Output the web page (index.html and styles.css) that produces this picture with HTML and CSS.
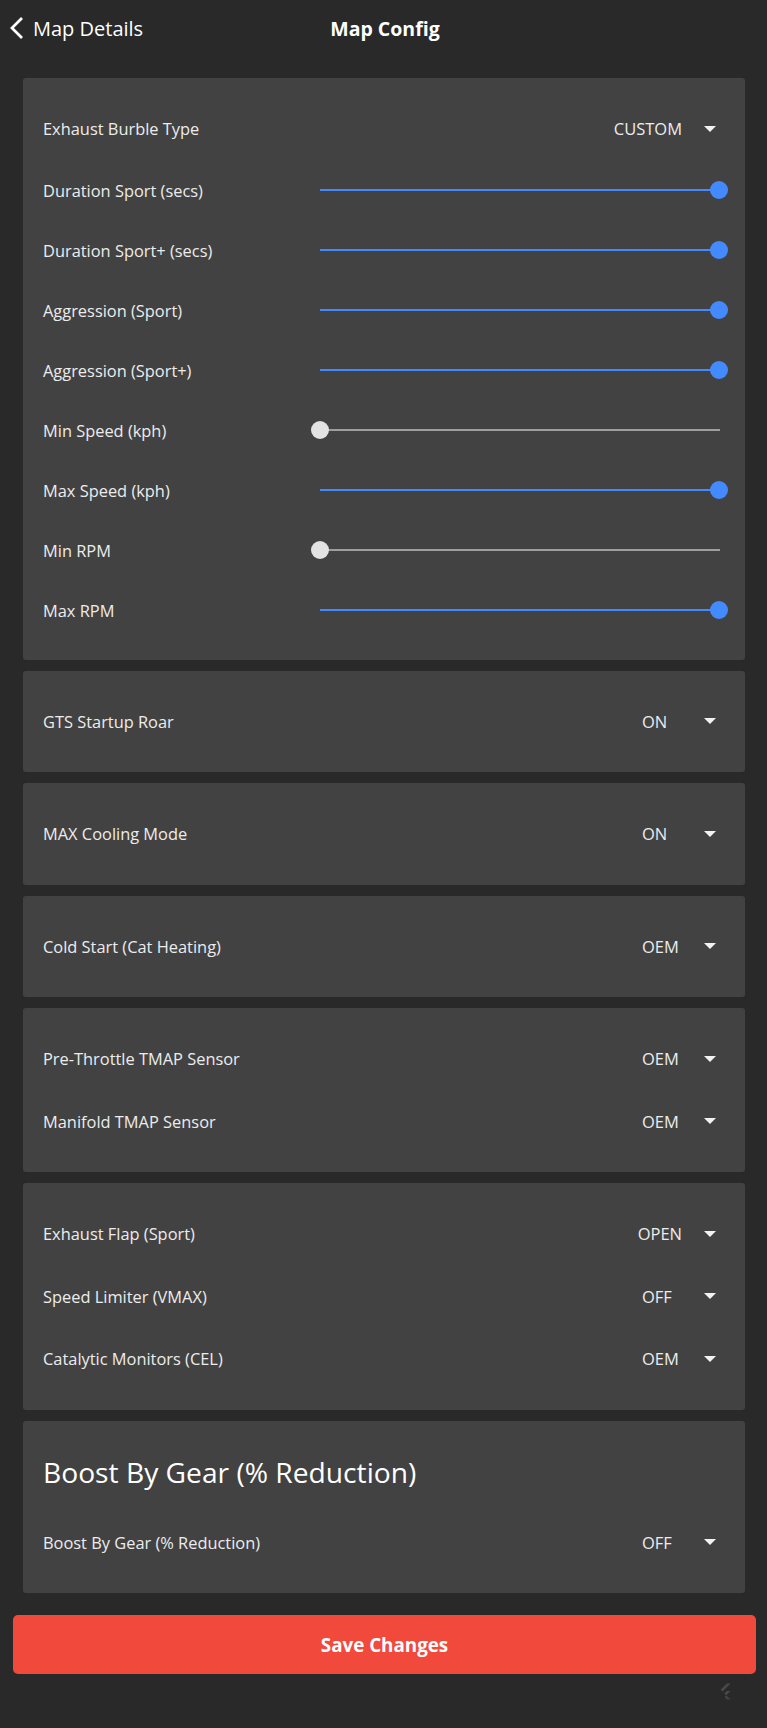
FILE: index.html
```html
<!DOCTYPE html>
<html lang="en">
<head>
    <meta charset="UTF-8">
    <meta name="viewport" content="width=device-width, initial-scale=1.0">
    <title>Map Config</title>
    <link rel="stylesheet" href="styles.css">
</head>
<body>

    <header class="topbar">
        <a class="back" href="#">
            <svg class="back-icon" viewBox="0 2.1 11.67 19.8" width="13" height="22">
                <path d="M11.67 3.87L9.9 2.1 0 12l9.9 9.9 1.77-1.77L3.54 12z" fill="#ffffff"/>
            </svg>
            <span>Map Details</span>
        </a>
        <h1 class="title">Map Config</h1>
        <div></div>
    </header>

    <main class="content">

        <section class="card">
            <div class="row">
                <span class="label">Exhaust Burble Type</span>
                <div class="select"><span class="value">CUSTOM</span><svg class="caret" viewBox="0 0 12 6"><path d="M0 0h12L6 6z"/></svg></div>
            </div>
            <div class="row slider-row">
                <span class="label">Duration Sport (secs)</span>
                <div class="slider full"><div class="track"></div><div class="thumb"></div></div>
            </div>
            <div class="row slider-row">
                <span class="label">Duration Sport+ (secs)</span>
                <div class="slider full"><div class="track"></div><div class="thumb"></div></div>
            </div>
            <div class="row slider-row">
                <span class="label">Aggression (Sport)</span>
                <div class="slider full"><div class="track"></div><div class="thumb"></div></div>
            </div>
            <div class="row slider-row">
                <span class="label">Aggression (Sport+)</span>
                <div class="slider full"><div class="track"></div><div class="thumb"></div></div>
            </div>
            <div class="row slider-row">
                <span class="label">Min Speed (kph)</span>
                <div class="slider empty"><div class="track"></div><div class="thumb"></div></div>
            </div>
            <div class="row slider-row">
                <span class="label">Max Speed (kph)</span>
                <div class="slider full"><div class="track"></div><div class="thumb"></div></div>
            </div>
            <div class="row slider-row">
                <span class="label">Min RPM</span>
                <div class="slider empty"><div class="track"></div><div class="thumb"></div></div>
            </div>
            <div class="row slider-row">
                <span class="label">Max RPM</span>
                <div class="slider full"><div class="track"></div><div class="thumb"></div></div>
            </div>
        </section>

        <section class="card">
            <div class="row">
                <span class="label">GTS Startup Roar</span>
                <div class="select"><span class="value">ON</span><svg class="caret" viewBox="0 0 12 6"><path d="M0 0h12L6 6z"/></svg></div>
            </div>
        </section>

        <section class="card">
            <div class="row">
                <span class="label">MAX Cooling Mode</span>
                <div class="select"><span class="value">ON</span><svg class="caret" viewBox="0 0 12 6"><path d="M0 0h12L6 6z"/></svg></div>
            </div>
        </section>

        <section class="card">
            <div class="row">
                <span class="label">Cold Start (Cat Heating)</span>
                <div class="select"><span class="value">OEM</span><svg class="caret" viewBox="0 0 12 6"><path d="M0 0h12L6 6z"/></svg></div>
            </div>
        </section>

        <section class="card">
            <div class="row">
                <span class="label">Pre-Throttle TMAP Sensor</span>
                <div class="select"><span class="value">OEM</span><svg class="caret" viewBox="0 0 12 6"><path d="M0 0h12L6 6z"/></svg></div>
            </div>
            <div class="row">
                <span class="label">Manifold TMAP Sensor</span>
                <div class="select"><span class="value">OEM</span><svg class="caret" viewBox="0 0 12 6"><path d="M0 0h12L6 6z"/></svg></div>
            </div>
        </section>

        <section class="card">
            <div class="row">
                <span class="label">Exhaust Flap (Sport)</span>
                <div class="select"><span class="value">OPEN</span><svg class="caret" viewBox="0 0 12 6"><path d="M0 0h12L6 6z"/></svg></div>
            </div>
            <div class="row">
                <span class="label">Speed Limiter (VMAX)</span>
                <div class="select"><span class="value">OFF</span><svg class="caret" viewBox="0 0 12 6"><path d="M0 0h12L6 6z"/></svg></div>
            </div>
            <div class="row">
                <span class="label">Catalytic Monitors (CEL)</span>
                <div class="select"><span class="value">OEM</span><svg class="caret" viewBox="0 0 12 6"><path d="M0 0h12L6 6z"/></svg></div>
            </div>
        </section>

        <section class="card">
            <h2 class="card-title">Boost By Gear (% Reduction)</h2>
            <div class="row">
                <span class="label">Boost By Gear (% Reduction)</span>
                <div class="select"><span class="value">OFF</span><svg class="caret" viewBox="0 0 12 6"><path d="M0 0h12L6 6z"/></svg></div>
            </div>
        </section>

    </main>

    <div class="actions">
        <button class="save-btn" type="button">Save Changes</button>
    </div>

    <footer class="footer">
        <svg class="logo" viewBox="0 0 12 16" width="12" height="17">
            <polygon points="8,0 11.5,0 3.5,8 1.75,6.25" fill="#4a4a4a"/>
            <polygon points="8,7.4 11.5,7.4 7.2,11.7 5.45,9.95" fill="#4a4a4a"/>
            <polygon points="5.45,13.45 7.2,11.7 11.5,16 8,16" fill="#444444"/>
        </svg>
    </footer>

</body>
</html>
```

FILE: styles.css
```css
body {
    margin: 0;
    min-height: 1728px;
    background-color: #292929;
    font-family: "Open Sans", "Noto Sans", sans-serif;
    color: #ececec;
}
.topbar {
    height: 56px;
    display: grid;
    grid-template-columns: 1fr auto 1fr;
    align-items: center;
    padding: 0 10px;
}
.back {
    display: flex;
    align-items: center;
    color: #ffffff;
    text-decoration: none;
    font-size: 20px;
}
.back-icon {
    margin-right: 10px;
}
.title {
    margin: 0;
    font-size: 19.5px;
    font-weight: 700;
    color: #ffffff;
    margin-left: 3px;
}
.content {
    display: flex;
    flex-direction: column;
    gap: 11px;
    padding: 22px 22px 0 23px;
}
.card {
    background-color: #424242;
    border-radius: 3px;
    padding: 19.5px 29px 19.5px 20px;
}
.card-title {
    margin: 12px 0 19px;
    font-size: 28.2px;
    line-height: 40px;
    font-weight: 400;
    color: #ffffff;
}
.row {
    height: 62.5px;
    display: flex;
    align-items: center;
    justify-content: space-between;
}
.label {
    font-size: 16.4px;
}
.select {
    display: flex;
    align-items: center;
}
.value {
    min-width: 40px;
    font-size: 16.5px;
}
.caret {
    width: 12px;
    height: 6px;
    margin-left: 22px;
    fill: #f2f2f2;
}
.slider-row {
    height: 60px;
    display: grid;
    grid-template-columns: 277px 1fr;
}
.slider {
    position: relative;
    height: 18px;
    margin-right: -4px;
}
.track {
    position: absolute;
    left: 0;
    right: 0;
    top: 8px;
    height: 2px;
}
.thumb {
    position: absolute;
    top: 0;
    width: 18px;
    height: 18px;
    border-radius: 50%;
}
.slider.full .track {
    background-color: #448aff;
}
.slider.full .thumb {
    right: -8px;
    background-color: #448aff;
}
.slider.empty .track {
    background-color: #9e9e9e;
}
.slider.empty .thumb {
    left: -9px;
    background-color: #e3e3e3;
}
.actions {
    padding: 22px 11px 0 13px;
}
.save-btn {
    display: block;
    width: 100%;
    height: 59px;
    border: none;
    border-radius: 5px;
    background-color: #f1493c;
    color: #ffffff;
    font-family: "Open Sans", "Noto Sans", sans-serif;
    font-size: 18.8px;
    font-weight: 700;
    cursor: pointer;
}
.footer {
    display: flex;
    justify-content: flex-end;
    padding: 9px 36px 0 0;
}
```
